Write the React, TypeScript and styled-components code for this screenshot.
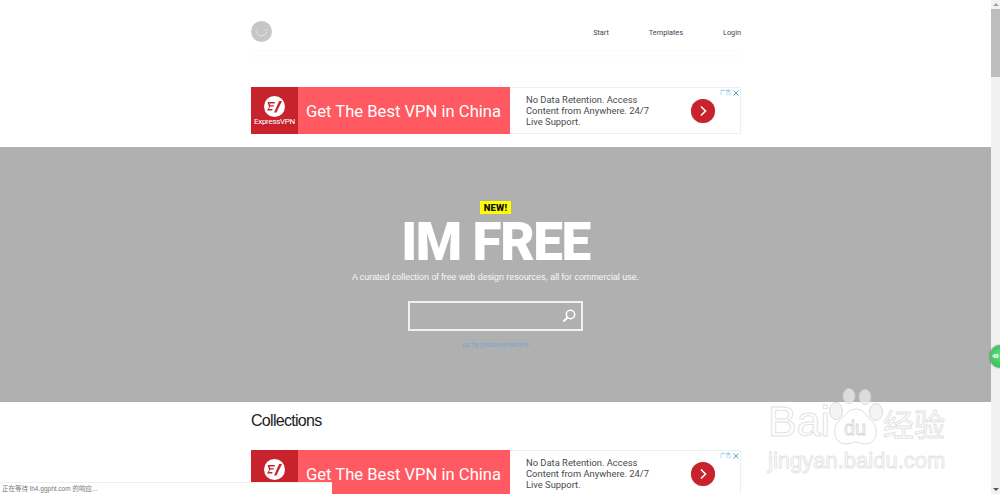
import React from "react";
import styled, { createGlobalStyle } from "styled-components";

const GlobalStyle = createGlobalStyle`
  html, body {
    margin: 0;
    padding: 0;
    height: 100%;
    overflow: hidden;
    background: #fff;
  }
  #root {
    height: 100%;
  }
`;

const Frame = styled.div`
  position: relative;
  display: flex;
  width: 1000px;
  height: 494px;
  overflow: hidden;
  font-family: "Liberation Sans", Arial, sans-serif;
`;

const Page = styled.div`
  width: 991px;
  flex: none;
`;

const Container = styled.div`
  width: 490px;
  margin-left: 251px;
`;

const Header = styled.header`
  height: 87px;
  background: linear-gradient(#fbfbfb, #fbfbfb) 0 50px / 100% 1px no-repeat,
    linear-gradient(#fcfcfc, #fcfcfc) 0 59px / 100% 1px no-repeat;
  display: flex;
  justify-content: space-between;
  align-items: flex-start;
`;

const Avatar = styled.div`
  width: 21px;
  height: 21px;
  margin-top: 21px;
  border-radius: 50%;
  background: #c6c6c6;
  display: flex;
`;

const Nav = styled.nav`
  display: flex;
  gap: 40px;
  margin-top: 27px;
`;

const NavLink = styled.a`
  font-family: Roboto, sans-serif;
  font-size: 7.3px;
  line-height: 11px;
  color: #3c4450;
`;

const AdBox = styled.div`
  display: flex;
  height: 47px;
  box-sizing: border-box;
  position: relative;
  background: #fff;
  font-family: Roboto, sans-serif;
`;

const AdLogo = styled.div`
  width: 47px;
  flex: none;
  background: #c8232c;
  display: flex;
  flex-direction: column;
  align-items: center;
  padding-top: 9px;
  box-sizing: border-box;
  color: #fff;
  font-size: 8px;
  letter-spacing: -0.3px;
  line-height: 10px;
`;

const AdHeadline = styled.div`
  width: 212px;
  flex: none;
  background: #ff5a61;
  color: #fff;
  font-size: 16.6px;
  line-height: 49px;
  padding-left: 8px;
  box-sizing: border-box;
  white-space: nowrap;
`;

const AdBody = styled.div`
  flex: 1;
  display: flex;
  align-items: center;
  border: 1px solid #efefef;
  border-left: none;
  padding-left: 16px;
  gap: 41px;
`;

const AdText = styled.div`
  width: 124px;
  font-size: 9.4px;
  line-height: 11px;
  color: #4a4a4a;
  white-space: nowrap;
  margin-top: -1px;
`;

const AdButton = styled.div`
  width: 24px;
  height: 24px;
  border-radius: 50%;
  background: #c8232c;
  box-shadow: 0 0 1px rgba(0, 0, 0, 0.35);
  display: flex;
  align-items: center;
  justify-content: center;
`;

const AdTag = styled.div`
  position: absolute;
  top: 2px;
  right: 2px;
  display: flex;
  gap: 2px;
  align-items: center;
  font-family: "Noto Sans CJK SC", sans-serif;
  font-size: 5.5px;
  line-height: 7px;
  color: #5fc0e8;
`;

const Hero = styled.section`
  margin-top: 13px;
  height: 255px;
  background: #b0b0b0;
  display: flex;
  flex-direction: column;
  align-items: center;
  padding-top: 54px;
  box-sizing: border-box;
`;

const NewBadge = styled.div`
  width: 31px;
  height: 13px;
  background: #ffff00;
  color: #111;
  font-family: Roboto, sans-serif;
  font-weight: 900;
  font-size: 9.5px;
  line-height: 13px;
  text-align: center;
  letter-spacing: 0.2px;
`;

const HeroTitle = styled.h1`
  margin: 0;
  font-family: Roboto, sans-serif;
  font-weight: 900;
  font-size: 53px;
  line-height: 56px;
  color: #fff;
  letter-spacing: -1.4px;
  white-space: nowrap;
`;

const Tagline = styled.p`
  margin: 0;
  margin-top: 1px;
  font-size: 8.9px;
  line-height: 12px;
  color: #f8f8f8;
  white-space: nowrap;
`;

const SearchBox = styled.div`
  width: 175px;
  height: 30px;
  margin-top: 18px;
  box-sizing: border-box;
  border: 2px solid #f0f0f0;
  display: flex;
  align-items: center;
  justify-content: flex-end;
  padding-right: 4px;
`;

const Credit = styled.a`
  margin-top: 9px;
  font-size: 6.3px;
  line-height: 9px;
  color: #72a5d3;
  white-space: nowrap;
`;

const SectionTitle = styled.h2`
  margin: 0;
  height: 48px;
  padding-top: 10px;
  box-sizing: border-box;
  font-weight: 400;
  font-size: 16px;
  line-height: 18px;
  color: #222;
  letter-spacing: -0.7px;
`;

const ScrollBar = styled.div`
  width: 9px;
  flex: none;
  background: #f1f1f1;
  display: flex;
  flex-direction: column;
  align-items: center;
`;

const ScrollArrow = styled.div<{ $down?: boolean }>`
  height: 9px;
  width: 100%;
  flex: none;
  display: flex;
  align-items: center;
  justify-content: center;
  margin-top: ${(p) => (p.$down ? "auto" : "0")};
  &::after {
    content: "";
    border-left: 3px solid transparent;
    border-right: 3px solid transparent;
    ${(p) => (p.$down ? "border-top: 3px solid #555;" : "border-bottom: 3px solid #a0a0a0;")}
  }
`;

const ScrollThumb = styled.div`
  width: 100%;
  height: 68px;
  background: #bdbdbd;
`;

const GreenBadge = styled.div`
  position: absolute;
  left: 990px;
  top: 345px;
  width: 10px;
  height: 23px;
  border-radius: 12px 0 0 12px;
  background: radial-gradient(circle at 100% 45%, #5ee07a, #2fb350);
  box-shadow: 0 0 2px rgba(0, 0, 0, 0.5);
  color: #fff;
  font-size: 6px;
  font-weight: 700;
  line-height: 23px;
  padding-left: 2px;
  box-sizing: border-box;
  white-space: nowrap;
  letter-spacing: -0.3px;
`;

const StatusBar = styled.div`
  position: absolute;
  left: 0;
  bottom: 0;
  width: 332px;
  height: 12px;
  background: #fff;
  border-top: 1px solid #eee;
  box-sizing: border-box;
  padding-left: 2px;
  font-family: "Liberation Sans", "Noto Sans CJK SC", sans-serif;
  font-size: 6.5px;
  line-height: 11px;
  color: #777;
`;

const Watermark = styled.div`
  position: absolute;
  left: 768px;
  top: 388px;
  width: 182px;
  pointer-events: none;
`;

const MarkRow = styled.div`
  display: flex;
  align-items: flex-end;
  height: 58px;
`;

const MarkWord = styled.span`
  font-family: "Liberation Sans", sans-serif;
  font-size: 43px;
  font-weight: 400;
  line-height: 46px;
  color: rgba(255, 255, 255, 0.75);
  -webkit-text-stroke: 1px rgba(205, 205, 205, 0.6);
  letter-spacing: 0;
  width: 60px;
  margin-bottom: 2px;
`;

const MarkCjk = styled(MarkWord)`
  font-family: "Noto Sans CJK SC", sans-serif;
  font-size: 31px;
  width: auto;
  margin-left: 0;
  margin-bottom: 0;
`;

const MarkUrl = styled.div`
  font-family: "Liberation Sans", sans-serif;
  font-size: 22px;
  line-height: 26px;
  margin-top: 2px;
  color: rgba(255, 255, 255, 0.75);
  -webkit-text-stroke: 1px rgba(205, 205, 205, 0.55);
  white-space: nowrap;
`;

const Paw = () => (
  <svg width="55" height="58" viewBox="0 0 55 58" style={{ flex: "none" }}>
    <g fill="rgba(240,240,240,0.7)" stroke="rgba(205,205,205,0.7)">
      <ellipse cx="21" cy="8" rx="6" ry="7.5" />
      <ellipse cx="37" cy="9" rx="6" ry="7.5" />
      <ellipse cx="8" cy="23" rx="6.5" ry="8.5" />
      <ellipse cx="48" cy="24" rx="6.5" ry="8.5" />
      <path fill="rgba(255,255,255,0.8)" d="M28 21c8 0 10 7 16 12 7 6 6 23-7 23-4 0-6-2-9-2s-6 2-10 2C5 56 4 39 11 33c6-5 9-12 17-12z" />
    </g>
    <text
      x="27"
      y="47"
      textAnchor="middle"
      fontFamily="Liberation Sans, sans-serif"
      fontSize="20"
      fill="#fff"
      stroke="rgba(200,200,200,0.8)"
      strokeWidth="0.8"
    >
      du
    </text>
  </svg>
);

const Smiley = () => (
  <svg width="21" height="21" viewBox="0 0 21 21">
    <path d="M5 10c1 5 8 7 11 1" fill="none" stroke="#e4e4e4" strokeWidth="1" />
    <path d="M6 7.5l1 1.5M14 8v2M15.5 8l.5 2" stroke="#e0e0e0" strokeWidth="0.8" />
  </svg>
);

const EvLogo = () => (
  <svg width="21" height="21" viewBox="0 0 21 21">
    <circle cx="10.5" cy="10.5" r="10.5" fill="#fff" />
    <path d="M3.5 6h7.5l-.5 1.4H5.3l1.2 1.9H10l-.4 1.3H6.2L5 13h3.6l-.4 1.4H3l2-3.2-.1-.9z" fill="#c8232c" />
    <path d="M10 16.5 15.2 5H18l-5.6 11.5z" fill="#c8232c" />
  </svg>
);

const Ad = () => (
  <AdBox>
    <AdLogo>
      <EvLogo />
      <span>ExpressVPN</span>
    </AdLogo>
    <AdHeadline>Get The Best VPN in China</AdHeadline>
    <AdBody>
      <AdText>
        No Data Retention. Access
        <br />
        Content from Anywhere. 24/7
        <br />
        Live Support.
      </AdText>
      <AdButton>
        <svg width="10" height="12" viewBox="0 0 10 12">
          <path d="M3 1.5 7.5 6 3 10.5" fill="none" stroke="#fff" strokeWidth="1.6" />
        </svg>
      </AdButton>
    </AdBody>
    <AdTag>
      <span>广告</span>
      <svg width="6" height="6" viewBox="0 0 6 6">
        <path d="M.5.5l5 5M5.5.5l-5 5" stroke="#4fa8d8" strokeWidth="1" />
      </svg>
    </AdTag>
  </AdBox>
);

export default function App() {
  return (
    <Frame>
      <GlobalStyle />
      <Page>
        <Container>
          <Header>
            <Avatar>
              <Smiley />
            </Avatar>
            <Nav>
              <NavLink>Start</NavLink>
              <NavLink>Templates</NavLink>
              <NavLink>Login</NavLink>
            </Nav>
          </Header>
          <Ad />
        </Container>
        <Hero>
          <NewBadge>NEW!</NewBadge>
          <HeroTitle>IM FREE</HeroTitle>
          <Tagline>A curated collection of free web design resources, all for commercial use.</Tagline>
          <SearchBox>
            <svg width="16" height="16" viewBox="0 0 16 16">
              <circle cx="9.5" cy="6.5" r="4.2" fill="none" stroke="#fff" strokeWidth="1.5" />
              <path d="M6.5 9.5 2.5 13.5" stroke="#fff" strokeWidth="2" />
            </svg>
          </SearchBox>
          <Credit>pic by photoeverywhere</Credit>
        </Hero>
        <Container>
          <SectionTitle>Collections</SectionTitle>
          <Ad />
        </Container>
      </Page>
      <ScrollBar>
        <ScrollArrow />
        <ScrollThumb />
        <ScrollArrow $down />
      </ScrollBar>
      <GreenBadge>48</GreenBadge>
      <Watermark>
        <MarkRow>
          <MarkWord>Bai</MarkWord>
          <Paw />
          <MarkCjk>经验</MarkCjk>
        </MarkRow>
        <MarkUrl>jingyan.baidu.com</MarkUrl>
      </Watermark>
      <StatusBar>正在等待 lh4.ggpht.com 的响应...</StatusBar>
    </Frame>
  );
}
